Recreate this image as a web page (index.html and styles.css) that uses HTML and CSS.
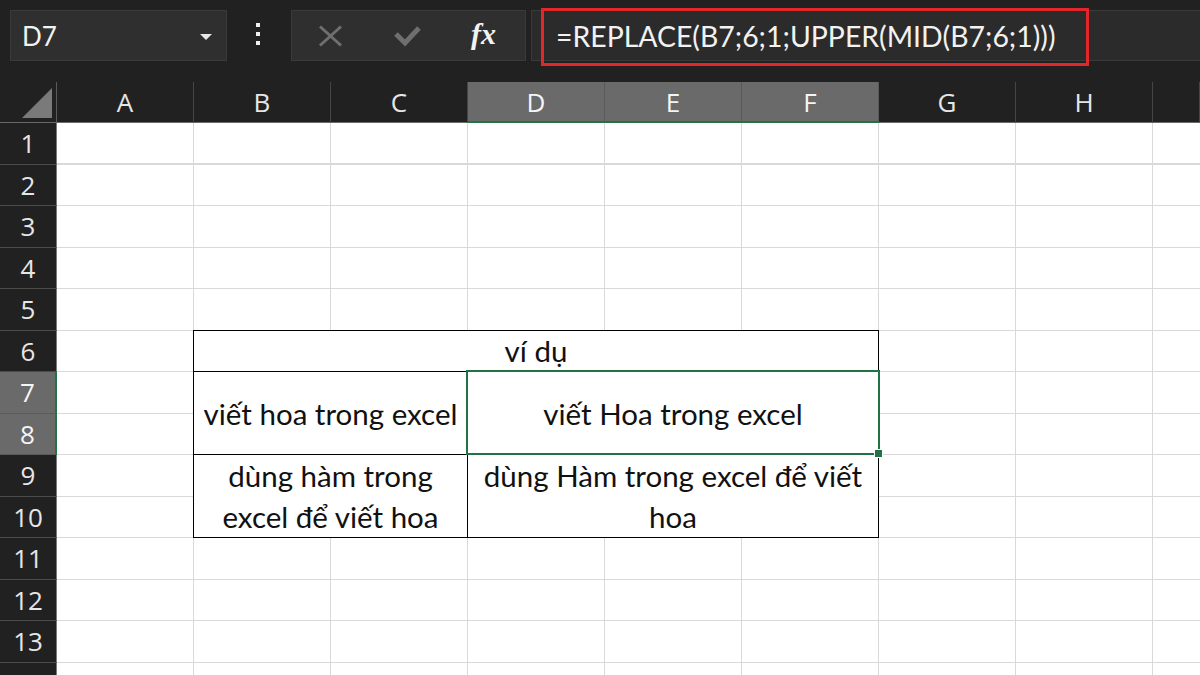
FILE: index.html
```html
<!DOCTYPE html>
<html lang="vi">
<head>
<meta charset="utf-8">
<title>Excel - viết hoa</title>
<link rel="stylesheet" href="styles.css">
</head>
<body>
<div class="app">
  <div class="topbar">
    <div class="namebox"><span class="name">D7</span><span class="caret"></span></div>
    <div class="kebab"><i></i><i></i><i></i></div>
    <div class="fxbox">
      <svg class="ico-x" width="25" height="22" viewBox="0 0 25 22"><path d="M2 1.5 L23 20.5 M23 1.5 L2 20.5" stroke="#6f6f6f" stroke-width="3" fill="none"/></svg>
      <svg class="ico-check" width="27" height="22" viewBox="0 0 27 22"><path d="M2 9 L11 18 L25 3" stroke="#6f6f6f" stroke-width="5" fill="none"/></svg>
      <span class="fx">fx</span>
    </div>
    <div class="formula">
      <span class="formula-text">=REPLACE(B7;6;1;UPPER(MID(B7;6;1)))</span>
      <div class="highlight"></div>
    </div>
  </div>

  <div class="sheet">
    <div class="corner"><svg width="30" height="30" viewBox="0 0 30 30"><path d="M30 0 L30 30 L0 30 Z" fill="#7a7a7a"/></svg></div>
    <div class="colhead">A</div>
    <div class="colhead">B</div>
    <div class="colhead">C</div>
    <div class="colhead sel">D</div>
    <div class="colhead sel">E</div>
    <div class="colhead sel">F</div>
    <div class="colhead">G</div>
    <div class="colhead">H</div>
    <div class="colhead"></div>

    <div class="rowhead">1</div>
    <div class="rowhead">2</div>
    <div class="rowhead">3</div>
    <div class="rowhead">4</div>
    <div class="rowhead">5</div>
    <div class="rowhead">6</div>
    <div class="rowhead sel">7</div>
    <div class="rowhead sel">8</div>
    <div class="rowhead">9</div>
    <div class="rowhead">10</div>
    <div class="rowhead">11</div>
    <div class="rowhead">12</div>
    <div class="rowhead">13</div>
    <div class="rowhead">14</div>

    <div class="cells"></div>

    <div class="t t-title first top">ví dụ</div>
    <div class="t t-b7 first">viết hoa trong excel</div>
    <div class="t t-d7 sel">viết Hoa trong excel</div>
    <div class="t t-b9 first">dùng hàm trong<br>excel để viết hoa</div>
    <div class="t t-d9">dùng Hàm trong excel để viết<br>hoa</div>
  </div>
</div>
</body>
</html>
```

FILE: styles.css
```css
html, body {
  margin: 0;
  padding: 0;
}

body {
  width: 1200px;
  height: 675px;
  overflow: hidden;
  background: #212121;
  font-family: Lato, "Noto Sans", sans-serif;
}

.app {
  width: 1200px;
  height: 675px;
  overflow: hidden;
}

/* ---------- top bar ---------- */
.topbar {
  height: 82px;
  box-sizing: border-box;
  padding-top: 10px;
  display: flex;
  align-items: flex-start;
}

.namebox {
  margin-left: 10px;
  width: 217px;
  height: 51px;
  box-sizing: border-box;
  background: #2f2f2f;
  border: 1px solid #3a3a3a;
  display: flex;
  align-items: center;
  justify-content: space-between;
  padding: 0 14px 0 11px;
}

.name {
  color: #f2f2f2;
  font-family: Lato, sans-serif;
  font-size: 26px;
}

.caret {
  width: 0;
  height: 0;
  border-left: 6px solid transparent;
  border-right: 6px solid transparent;
  border-top: 6px solid #e8e8e8;
  margin-top: 2px;
}

.kebab {
  margin-left: 29px;
  margin-top: 13px;
  display: flex;
  flex-direction: column;
  gap: 5px;
}

.kebab i {
  display: block;
  width: 4px;
  height: 4px;
  background: #f0f0f0;
}

.fxbox {
  margin-left: 31px;
  width: 235px;
  height: 51px;
  box-sizing: border-box;
  background: #2f2f2f;
  border: 1px solid #3a3a3a;
  display: flex;
  align-items: center;
  padding-left: 26px;
}

.ico-x {
  margin-right: 51px;
}

.ico-check {
  margin-right: 50px;
}

.fx {
  font-family: "Liberation Serif", "DejaVu Serif", serif;
  font-style: italic;
  font-weight: bold;
  font-size: 30px;
  color: #f2f2f2;
  line-height: 1;
  margin-top: -4px;
}

.formula {
  position: relative;
  margin-left: 5px;
  flex: 1;
  height: 51px;
  box-sizing: border-box;
  background: #2b2b2b;
  border: 1px solid #3a3a3a;
  border-right: none;
  display: flex;
  align-items: center;
  padding-left: 24px;
}

.formula-text {
  color: #f2f2f2;
  font-family: Lato, sans-serif;
  font-size: 28.4px;
  white-space: nowrap;
}

.highlight {
  position: absolute;
  left: 9px;
  top: -3px;
  width: 548px;
  height: 58px;
  box-sizing: border-box;
  border: 3px solid #e3262a;
}

/* ---------- sheet grid ---------- */
.sheet {
  display: grid;
  grid-template-columns: 57px repeat(8, 137px) 1fr;
  grid-template-rows: 41px repeat(14, 41.5px);
}

.corner {
  grid-row: 1;
  grid-column: 1;
  box-sizing: border-box;
  border-right: 1px solid #5a5a5a;
  border-bottom: 1px solid #6a6a6a;
  display: flex;
  align-items: flex-end;
  justify-content: flex-end;
  padding: 0 4px 4px 0;
}

.corner svg {
  display: block;
}

.colhead {
  box-sizing: border-box;
  border-right: 1px solid #464646;
  border-bottom: 1px solid #6a6a6a;
  display: flex;
  align-items: center;
  justify-content: center;
  color: #e6e6e6;
  font-family: "Open Sans", "Noto Sans", sans-serif;
  font-size: 26px;
}

.colhead.sel {
  background: #6a6a6a;
  border-right-color: #5a5a5a;
  border-bottom: 2px solid #217346;
  color: #f5f5f5;
}

.rowhead {
  grid-column: 1;
  box-sizing: border-box;
  border-bottom: 1px solid #4c4c4c;
  border-right: 1px solid #7a7a7a;
  display: flex;
  align-items: center;
  justify-content: center;
  color: #e6e6e6;
  font-family: "Open Sans", "Noto Sans", sans-serif;
  font-size: 26px;
}

.rowhead.sel {
  background: #6a6a6a;
  border-bottom-color: #5a5a5a;
  border-right: 2px solid #217346;
  color: #f5f5f5;
}

.cells {
  grid-column: 2 / -1;
  grid-row: 2 / -1;
  background-color: #ffffff;
  background-image:
    repeating-linear-gradient(to right, transparent 0 136px, #d9d9d9 136px 137px),
    repeating-linear-gradient(to bottom, transparent 0 40.5px, #d9d9d9 40.5px 41.5px);
}

/* ---------- data table ---------- */
.t {
  background: #ffffff;
  border-right: 1px solid #000;
  border-bottom: 1px solid #000;
  display: flex;
  align-items: center;
  justify-content: center;
  text-align: center;
  color: #111;
  font-family: Lato, "Noto Sans", sans-serif;
  font-size: 29.5px;
  line-height: 41px;
}

.t.first {
  border-left: 1px solid #000;
  margin-left: -1px;
}

.t.top {
  border-top: 1px solid #000;
  margin-top: -1px;
}

.t-title { grid-column: 3 / 8; grid-row: 7; }
.t-b7 { grid-column: 3 / 5; grid-row: 8 / 10; }
.t-d7 { grid-column: 5 / 8; grid-row: 8 / 10; }
.t-b9 { grid-column: 3 / 5; grid-row: 10 / 12; }
.t-d9 { grid-column: 5 / 8; grid-row: 10 / 12; }

.t.sel {
  position: relative;
}

.t.sel::after {
  content: "";
  position: absolute;
  top: -2px;
  left: -2px;
  right: -2px;
  bottom: -1px;
  border: 2px solid #217346;
  pointer-events: none;
}

.t.sel::before {
  content: "";
  position: absolute;
  right: -5px;
  bottom: -4px;
  width: 7px;
  height: 7px;
  background: #217346;
  border: 1px solid #ffffff;
  z-index: 1;
}
```
